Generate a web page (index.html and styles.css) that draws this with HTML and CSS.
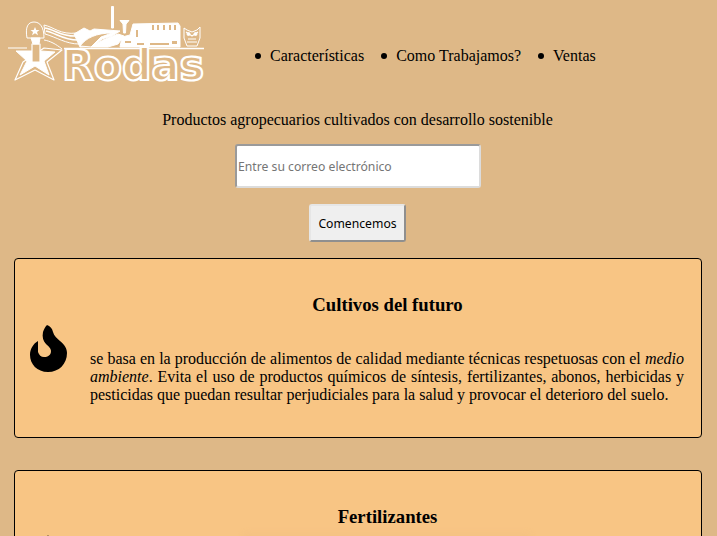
FILE: index.html
```html
<!DOCTYPE html>
<html lang="es">
<head>
<meta charset="utf-8">
<title>Rodas</title>
<link rel="stylesheet" href="styles.css">
</head>
<body>
<header class="header">
  <svg class="logo" width="205" height="92" viewBox="0 0 205 92" fill="none">
    <g stroke="#fff" stroke-width="1" stroke-linejoin="round">
      <!-- star outline and fill -->
      <path d="M8 48 L27 48 M44 48 L62 50 L47 62 L54 80 L35 70 L15 80 L23 62 Z" stroke-width="1.2"/>
      <path d="M16 51 L30 51 L41 51 L55 52 L44 61 L49 75 L35 66 L20 75 L27 61 Z" fill="#fff"/>
      <path d="M32 44 H40 V62 H32 Z" fill="#deb887" stroke-width="1.2"/>
      <!-- cap -->
      <path d="M27 38 C25 27 28 22 34 22 C40 22 44 27 44 38 Z" fill="#deb887"/>
      <path d="M31 38 H40 L39 44 H33 Z" fill="#fff"/>
      <path d="M35 27 l1.300 3 h3.200 l-2.500 2 1 3.200 -3-2 -3 2 1-3.200 -2.500-2 h3.200 Z" fill="#fff" stroke="none"/>
      <!-- flag -->
      <path d="M44 25 C54 27 60 35 77 33 L79 44 C66 44 56 37 45 34 Z" fill="#deb887"/>
      <path d="M45 28 C56 30 62 37 77 36 M46 31 C56 33 63 40 78 40" stroke-width="1.600"/>
      <path d="M44 40 C50 41 56 44 62 49" stroke-width="1"/>
      <!-- hills and swoosh -->
      <path d="M74 34 L84 28 L90 31 L94 29 L120 31 L112 36 L102 39 L94 46 L80 47 Z" fill="#fff"/>
      <path d="M80 46 C86 38 96 33 112 33 L101 37 L91 47 Z" fill="#deb887"/>
      <path d="M91 47 L103 40 L118 34 L124 36 L118 44 L108 47 Z" fill="#fff"/>
      <!-- tower and mushroom -->
      <path d="M111.500 6.500 H113.500 V28 H111.500 Z" fill="#fff"/>
      <path d="M120 20.500 H129 L126 24 L125.500 33 H123.500 L123 24 Z" fill="#fff"/>
      <!-- factory -->
      <path d="M120 47 L122 37 L130 35 L133 24 L178 23 L180 26 L180 47 Z" fill="#fff"/>
      <!-- owl -->
      <path d="M184 28 L187 30 L192 32 L197 30 L200 27 L200 38 L197 46 H187 L184 38 Z" fill="#deb887"/>
      <path d="M186 32 L192 36 L198 32 M188 39 H196 M187 42 H197" stroke-width="1.200"/>
      <circle cx="188.500" cy="34" r="1.500" fill="#fff"/>
      <circle cx="195.500" cy="34" r="1.500" fill="#fff"/>
      <path d="M64 48.500 H204" stroke-width="1.500"/>
    </g>
    <g fill="#deb887">
      <rect x="152" y="25" width="2" height="5"/>
      <rect x="157" y="25" width="2" height="5"/>
      <rect x="163" y="25" width="2" height="5"/>
      <rect x="169" y="25" width="2" height="5"/>
      <rect x="174" y="25" width="2" height="5"/>
      <rect x="136" y="30" width="2" height="7"/>
      <rect x="125" y="41" width="6" height="2"/>
      <rect x="137" y="43" width="7" height="2"/>
      <rect x="150" y="43" width="19" height="2"/>
      <rect x="172" y="41" width="5" height="3"/>
    </g>
    <text class="logo-text" x="62" y="79.500" textLength="142" lengthAdjust="spacingAndGlyphs">Rodas</text>
  </svg>
  <ul class="nav">
    <li>Características</li>
    <li>Como Trabajamos?</li>
    <li>Ventas</li>
  </ul>
</header>
<section class="signup">
  <p class="tagline">Productos agropecuarios cultivados con desarrollo sostenible</p>
  <input class="email" type="email" placeholder="Entre su correo electrónico">
  <button class="start" type="button">Comencemos</button>
</section>
<main class="cards">
  <article class="card">
    <svg class="card-icon" width="37" height="47" viewBox="0 0 37 47">
      <path d="M17 0 C20 1 22 3 23 7 C24 11 27 13 30 16 C35 20 37 24 37 28 C37 39 29 47 18 47 C7 47 0 39 0 30 C0 24 3 19 8 16 C8 20 8 24 8 27 C9 30 11 32 14 32 C18 32 21 30 21 26 C21 23 18 21 16 19 C13 16 12 12 13 7 C14 4 15 2 17 0 Z" fill="#000"/>
    </svg>
    <div class="card-body">
      <h2>Cultivos del futuro</h2>
      <p>se basa en la producción de alimentos de calidad mediante técnicas respetuosas con el <em>medio ambiente</em>. Evita el uso de productos químicos de síntesis, fertilizantes, abonos, herbicidas y pesticidas que puedan resultar perjudiciales para la salud y provocar el deterioro del suelo.</p>
    </div>
  </article>
  <article class="card">
    <svg class="card-icon" width="37" height="51" viewBox="0 0 37 51">
      <path d="M18 0 C22 8 34 20 34 34 C34 44 27 51 18 51 C9 51 3 44 3 34 C3 20 14 8 18 0 Z" fill="#000"/>
    </svg>
    <div class="card-body">
      <h2>Fertilizantes</h2>
      <div class="card-figure"></div>
    </div>
  </article>
</main>
</body>
</html>
```
FILE: styles.css
```css
html, body { margin: 0; padding: 0; }
body {
  background: #deb887;
  color: #000;
  font-family: "Liberation Serif", "Times New Roman", serif;
  font-size: 16px;
  overflow: hidden;
  height: 536px;
}
.header {
  display: flex;
  align-items: flex-start;
  height: 92px;
}
.logo { flex: none; }
.logo-text {
  font-family: "DejaVu Sans", Verdana, sans-serif;
  font-weight: 700;
  font-size: 42px;
  fill: #deb887;
  stroke: #fff;
  stroke-width: 2.2px;
}
.nav {
  display: flex;
  list-style: none;
  margin: 47px 0 0 50px;
  padding: 0;
  gap: 17px;
}
.nav li { display: flex; align-items: center; line-height: 18px; }
.nav li::before {
  content: "";
  width: 6px;
  height: 6px;
  border-radius: 50%;
  background: #000;
  margin-right: 9px;
}
.signup {
  display: flex;
  flex-direction: column;
  align-items: center;
  padding-right: 2px;
}
.tagline { margin: 19px 0 15px; line-height: 18px; }
.email {
  width: 246px;
  height: 44px;
  margin-left: 1px;
  box-sizing: border-box;
  padding: 0 0 0 1px;
  border: 2px solid;
  border-color: #9a9a9a #dcdcdc #dcdcdc #9a9a9a;
  border-radius: 3px;
  background: #fff;
  font-family: "Noto Sans", Tahoma, sans-serif;
  font-size: 12.2px;
}
.email::placeholder { color: #757575; }
.start {
  margin-top: 16px;
  width: 97px;
  height: 38px;
  box-sizing: border-box;
  border: 2px solid;
  border-color: #e6e6e6 #8f8f8f #8f8f8f #e6e6e6;
  border-radius: 3px;
  background: #efefef;
  color: #000;
  font-family: "Noto Sans", Tahoma, sans-serif;
  font-size: 12.2px;
  padding: 1px 0 0;
}
.cards { display: flex; flex-direction: column; gap: 32px; margin: 16px 15px 0 14px; }
.card {
  display: flex;
  align-items: center;
  gap: 23px;
  border: 1px solid #000;
  border-radius: 4px;
  background: #f8c584;
  padding: 0 17px 0 15px;
  height: 180px;
  box-sizing: border-box;
  flex: none;
}
.card-icon { flex: none; }
.card-body { flex: 1; align-self: flex-start; padding-top: 35px; }
.card-body h2 {
  font-size: 18.72px;
  line-height: 22px;
  text-align: center;
  margin: 0 0 34px;
  padding-left: 1px;
}
.card-body p { margin: 0; text-align: justify; line-height: 18px; }
.card-body h2 + .card-figure { margin: -30px auto 0; }
.card-figure {
  width: 290px;
  height: 60px;
  background: #f5c283;
  border-radius: 6px;
  filter: blur(2px);
}
```
